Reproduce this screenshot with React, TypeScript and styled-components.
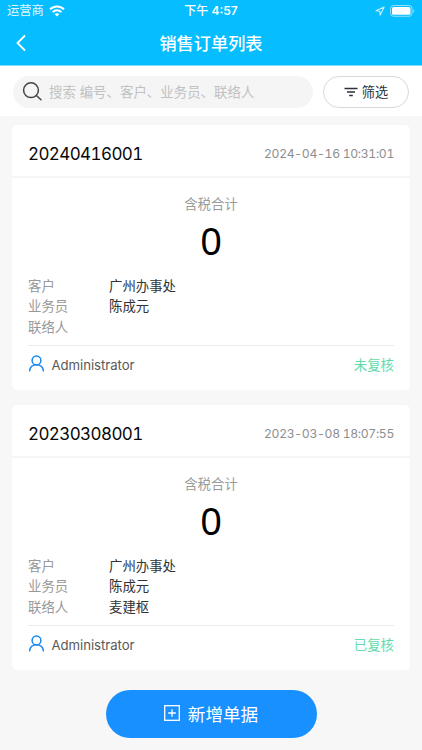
import React from 'react';
import styled, { createGlobalStyle } from 'styled-components';

const GlobalStyle = createGlobalStyle`
  * { box-sizing: border-box; }
  html, body { margin: 0; padding: 0; background: #f7f7f7; }
  body { font-family: Inter, "Noto Sans CJK SC", sans-serif; overflow: hidden; }
  button { font-family: inherit; border: 0; padding: 0; cursor: pointer; }
`;

const Screen = styled.div`
  width: 422px;
  height: 750px;
  display: flex;
  flex-direction: column;
  background: #f7f7f7;
  overflow: hidden;
`;

const Header = styled.header`
  height: 66px;
  flex: none;
  background: #05bdff;
  border-bottom: 1px solid #7ddcff;
  color: #fff;
`;

const StatusBar = styled.div`
  height: 22px;
  display: grid;
  grid-template-columns: 1fr auto 1fr;
  align-items: center;
  padding: 0 7px;
  line-height: 22px;
`;

const Carrier = styled.div`
  display: flex;
  align-items: center;
  gap: 5px;
  font-size: 12.3px;
  color: #e2f7ff;
`;

const Clock = styled.div`
  font-size: 12px;
  font-weight: 500;
  white-space: nowrap;
`;

const ClockDigits = styled.span`
  font-weight: 600;
  font-feature-settings: "case";
`;

const DeviceState = styled.div`
  display: flex;
  justify-content: flex-end;
  align-items: center;
  gap: 5px;
`;

const NavBar = styled.div`
  height: 43px;
  display: grid;
  grid-template-columns: 60px 1fr 60px;
  align-items: center;
`;

const BackButton = styled.button`
  background: none;
  display: flex;
  padding: 0 0 1px 15px;
`;

const Title = styled.h1`
  margin: 0;
  font-size: 17.2px;
  line-height: 42px;
  font-weight: 500;
  text-align: center;
`;

const Toolbar = styled.div`
  flex: none;
  height: 50px;
  background: #fff;
  display: flex;
  gap: 10px;
  padding: 10px 13px 8px;
`;

const SearchBox = styled.label`
  width: 300px;
  height: 32px;
  border-radius: 16px;
  background: #f5f5f5;
  display: flex;
  align-items: center;
  gap: 6px;
  padding-left: 9px;
`;

const Placeholder = styled.span`
  font-size: 13.45px;
  line-height: 30px;
  color: #c1c1c1;
  white-space: nowrap;
`;

const FilterButton = styled.button`
  width: 86px;
  height: 32px;
  border: 1px solid #d8d9de;
  border-radius: 16px;
  background: #fff;
  display: flex;
  align-items: center;
  justify-content: center;
  gap: 4px;
  font-size: 13.2px;
  line-height: 30px;
  color: #2b303a;
`;

const OrderList = styled.main`
  flex: none;
  padding: 9px 12px 0;
  display: flex;
  flex-direction: column;
  gap: 15px;
`;

const OrderCard = styled.article`
  height: 265px;
  border-radius: 5px;
  background: #fff;
`;

const CardHead = styled.div`
  height: 53px;
  border-bottom: 2px solid #f5f5f5;
  padding: 7px 16px 0;
  display: flex;
  justify-content: space-between;
  align-items: center;
  font-variant-numeric: tabular-nums;
`;

const OrderNumber = styled.div`
  font-size: 17px;
  letter-spacing: -0.6px;
  color: #080808;
`;

const OrderTime = styled.time`
  margin-bottom: 2px;
  font-size: 12.2px;
  letter-spacing: -0.33px;
  color: #8e8e8e;
`;

const Total = styled.div`
  height: 97px;
  padding-top: 16px;
  text-align: center;
`;

const TotalLabel = styled.div`
  font-size: 13.4px;
  line-height: 20px;
  color: #9b9b9b;
`;

const TotalValue = styled.div`
  font-family: "Noto Sans", sans-serif;
  font-size: 38px;
  line-height: 53px;
  color: #000;
`;

const Details = styled.dl`
  margin: 0 16px;
  height: 71px;
  padding-top: 1px;
  border-bottom: 1px solid #ebebeb;
  display: grid;
  grid-template-columns: 81px 1fr;
  grid-auto-rows: 20.3px;
  font-size: 13.4px;
  line-height: 20.3px;
`;

const DetailLabel = styled.dt`
  color: #999;
`;

const DetailValue = styled.dd`
  margin: 0;
  color: #333;
`;

const CardFoot = styled.div`
  height: 38px;
  padding: 0 16px;
  display: flex;
  align-items: center;
`;

const UserGlyph = styled.svg`
  width: 17px;
  height: 17px;
  margin-bottom: 4px;
`;

const Owner = styled.span`
  margin-left: 6.5px;
  font-size: 13.2px;
  letter-spacing: -0.05px;
  color: #595959;
`;

const ReviewState = styled.span`
  margin-left: auto;
  font-size: 13.4px;
  line-height: 20px;
  color: #61dbab;
`;

const Footer = styled.footer`
  padding-top: 20px;
  display: flex;
  justify-content: center;
`;

const AddButton = styled.button`
  width: 211px;
  height: 47.5px;
  border-radius: 24px;
  background: #1990ff;
  color: #fff;
  display: flex;
  align-items: center;
  justify-content: center;
  gap: 8px;
  padding-bottom: 1px;
  font-size: 17.6px;
`;

const WifiIcon = () => (
  <svg width="16" height="12" viewBox="0 0 16 12" fill="none" stroke="#fff" strokeWidth="2">
    <path d="M1 4.4C5 .4 11 .4 15 4.4M3.6 7.1c2.5-2.4 6.3-2.4 8.8 0" />
    <path d="M8 11.5 5.6 9.1c1.4-1.2 3.4-1.2 4.8 0Z" fill="#fff" stroke="none" />
  </svg>
);

const LocationIcon = () => (
  <svg width="10" height="10" viewBox="0 0 10 10" fill="none" stroke="#c9f0ff" strokeWidth="1.1" strokeLinejoin="round">
    <path d="M9.1.9.9 4.8l3.9.4.4 3.9Z" />
  </svg>
);

const BatteryIcon = () => (
  <svg width="25" height="12" viewBox="0 0 25 12">
    <rect x=".5" y=".5" width="21.5" height="10.8" rx="3" fill="none" stroke="#8fe0ff" />
    <rect x="2" y="2" width="18.5" height="7.8" rx="1.6" fill="#fff" />
    <path d="M23.3 4v4c1.4-.6 1.4-3.4 0-4Z" fill="#8fe0ff" />
  </svg>
);

const BackIcon = () => (
  <svg width="12" height="18" viewBox="0 0 12 18" fill="none" stroke="#fff" strokeWidth="1.8">
    <path d="M10 1.5 2.5 9l7.5 7.5" />
  </svg>
);

const SearchIcon = () => (
  <svg width="21" height="20" viewBox="0 0 21 20" fill="none" stroke="#444" strokeWidth="1.5" strokeLinecap="round">
    <circle cx="9" cy="8.2" r="7.4" />
    <path d="m14.4 13.5 4.6 4.2" />
  </svg>
);

const FilterIcon = () => (
  <svg width="14" height="10" viewBox="0 0 14 10" fill="none" stroke="#2b303a" strokeWidth="1.5">
    <path d="M.5 1.5h13M3 5h8M5.2 8.5h3.6" />
  </svg>
);

const UserIcon = () => (
  <UserGlyph viewBox="0 0 17 17" fill="none" stroke="#1989ee" strokeWidth="1.5" strokeLinecap="round">
    <circle cx="8.5" cy="5.4" r="4.4" />
    <path d="M1.6 15.8c.5-3.8 3-6 6.9-6s6.4 2.2 6.9 6" />
  </UserGlyph>
);

const AddIcon = () => (
  <svg width="16" height="16" viewBox="0 0 16 16" fill="none" stroke="#fff" strokeWidth="1.3">
    <rect x=".7" y=".7" width="14.6" height="14.6" />
    <path d="M8 4.2v7.6M4.2 8h7.6" />
  </svg>
);

interface Order {
  number: string;
  time: string;
  contact: string;
  state: string;
}

const orders: Order[] = [
  { number: '20240416001', time: '2024-04-16 10:31:01', contact: '', state: '未复核' },
  { number: '20230308001', time: '2023-03-08 18:07:55', contact: '麦建枢', state: '已复核' },
];

export default function App() {
  return (
    <>
      <GlobalStyle />
      <Screen lang="zh-CN">
        <Header>
          <StatusBar>
            <Carrier>运营商<WifiIcon /></Carrier>
            <Clock>下午 <ClockDigits>4:57</ClockDigits></Clock>
            <DeviceState><LocationIcon /><BatteryIcon /></DeviceState>
          </StatusBar>
          <NavBar>
            <BackButton aria-label="返回"><BackIcon /></BackButton>
            <Title>销售订单列表</Title>
          </NavBar>
        </Header>
        <Toolbar>
          <SearchBox><SearchIcon /><Placeholder>搜索 编号、客户、业务员、联络人</Placeholder></SearchBox>
          <FilterButton><FilterIcon />筛选</FilterButton>
        </Toolbar>
        <OrderList>
          {orders.map((order) => (
            <OrderCard key={order.number}>
              <CardHead>
                <OrderNumber>{order.number}</OrderNumber>
                <OrderTime>{order.time}</OrderTime>
              </CardHead>
              <Total>
                <TotalLabel>含税合计</TotalLabel>
                <TotalValue>0</TotalValue>
              </Total>
              <Details>
                <DetailLabel>客户</DetailLabel>
                <DetailValue>广州办事处</DetailValue>
                <DetailLabel>业务员</DetailLabel>
                <DetailValue>陈成元</DetailValue>
                <DetailLabel>联络人</DetailLabel>
                <DetailValue>{order.contact}</DetailValue>
              </Details>
              <CardFoot>
                <UserIcon />
                <Owner>Administrator</Owner>
                <ReviewState>{order.state}</ReviewState>
              </CardFoot>
            </OrderCard>
          ))}
        </OrderList>
        <Footer>
          <AddButton><AddIcon />新增单据</AddButton>
        </Footer>
      </Screen>
    </>
  );
}
